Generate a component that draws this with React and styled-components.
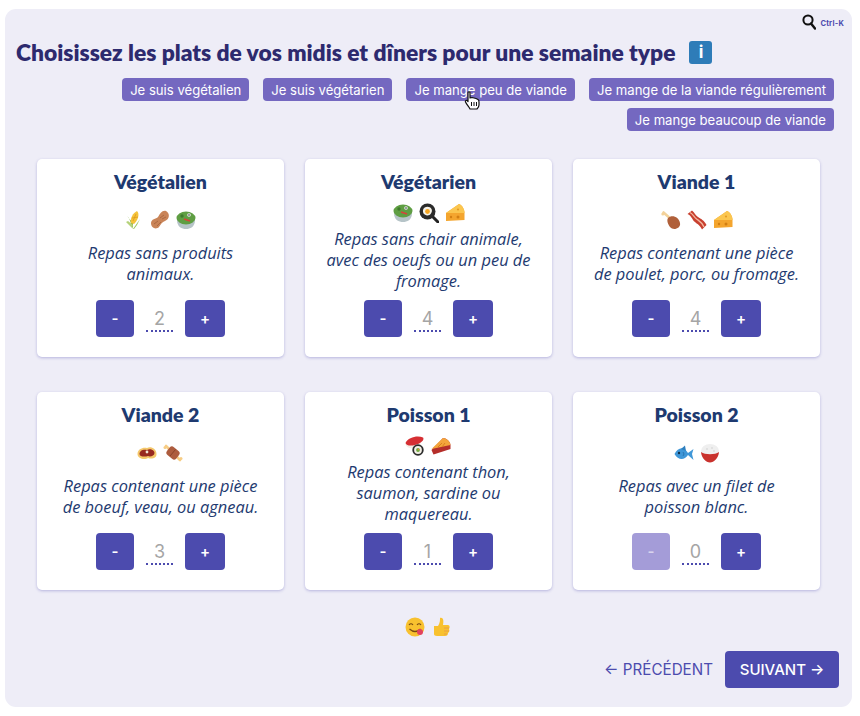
import React from 'react';
import styled, { createGlobalStyle } from 'styled-components';

const HEADING_FONT = `Lato, 'Noto Sans', sans-serif`;
const BODY_FONT = `'Open Sans', 'Noto Sans', sans-serif`;
const UI_FONT = `Inter, 'Liberation Sans', sans-serif`;

const GlobalStyle = createGlobalStyle`
  body {
    margin: 0;
    background: #fff;
    font-family: ${UI_FONT};
  }
  * { box-sizing: border-box; }
`;

const Page = styled.div`
  width: 860px;
  height: 716px;
  padding: 9px 8px 9px 5px;
  position: relative;
  overflow: hidden;
`;

const Panel = styled.main`
  height: 698px;
  background: #eeedf7;
  border-radius: 11px;
  padding: 5px 13px 0 11px;
  display: flex;
  flex-direction: column;
`;

const SearchRow = styled.div`
  height: 16px;
  display: flex;
  justify-content: flex-end;
  align-items: center;
  gap: 4px;
`;

const Shortcut = styled.span`
  font-size: 7.5px;
  font-weight: 700;
  color: #4c4bae;
  margin-right: -5px;
  padding-top: 3px;
  letter-spacing: 0.2px;
`;

const TitleRow = styled.div`
  display: flex;
  align-items: center;
  gap: 14px;
  margin-top: 7px;
  height: 30px;
`;

const Title = styled.h1`
  margin: 0;
  font-family: ${HEADING_FONT};
  font-size: 22.8px;
  line-height: 30px;
  font-weight: 800;
  color: #2d2a6e;
  white-space: nowrap;
`;

const InfoButton = styled.span`
  width: 23px;
  height: 23px;
  border-radius: 3px;
  background: #2e7cb8;
  color: #fff;
  font-size: 17px;
  font-weight: 700;
  display: flex;
  align-items: center;
  justify-content: center;
`;

const Presets = styled.div`
  display: flex;
  flex-wrap: wrap;
  justify-content: flex-end;
  gap: 7px 14px;
  margin-top: 11px;
  padding-right: 5px;
  height: 53px;
`;

const Preset = styled.button`
  height: 23px;
  padding: 1px 8px 0;
  border: none;
  border-radius: 4px;
  background: #7468c0;
  color: #fff;
  font-family: ${UI_FONT};
  font-size: 13.12px;
  line-height: 22px;
  white-space: nowrap;
`;

const Grid = styled.section`
  display: grid;
  grid-template-columns: repeat(3, 247px);
  grid-auto-rows: 198px;
  gap: 35px 21px;
  margin: 28px 0 0 21px;
`;

const Card = styled.article`
  background: #fff;
  border-radius: 5px;
  box-shadow: 0 1px 3px rgba(76, 75, 174, 0.35);
  padding: 9px 14px 20px;
  display: flex;
  flex-direction: column;
  align-items: center;
`;

const CardTitle = styled.h2`
  margin: 0 0 2px;
  font-family: ${HEADING_FONT};
  font-size: 19.5px;
  line-height: 27px;
  font-weight: 800;
  color: #1e3a70;
`;

const CardBody = styled.div`
  flex: 1;
  display: flex;
  flex-direction: column;
  justify-content: space-evenly;
  align-items: center;
`;

const Emojis = styled.div`
  height: 18px;
  margin-top: 2px;
  display: flex;
  align-items: center;
  gap: 6px;
`;

const EmojiSvg = styled.svg`
  width: 20px;
  height: 20px;
  flex: none;
`;

const Description = styled.p`
  margin: 0 0 1px;
  font-family: ${BODY_FONT};
  font-size: 16.4px;
  line-height: 21px;
  font-style: italic;
  color: #1e3a70;
  text-align: center;
  white-space: pre-line;
`;

const Controls = styled.div`
  height: 37px;
  margin-top: 3px;
  display: flex;
  align-items: center;
  gap: 12px;
`;

const StepButton = styled.button`
  width: ${({ $wide }) => ($wide ? 40 : 38)}px;
  height: 37px;
  border: none;
  border-radius: 4px;
  background: ${({ disabled }) => (disabled ? '#a49cd8' : '#4c4bae')};
  color: ${({ disabled }) => (disabled ? '#d8d4ee' : '#fff')};
  font-family: ${UI_FONT};
  font-size: 15px;
  font-weight: 600;
`;

const Count = styled.span`
  width: 27px;
  height: 26px;
  border-bottom: 2px dotted #4c4bae;
  color: #a5a5a5;
  font-size: 18px;
  line-height: 26px;
  text-align: center;
`;

const Reaction = styled.div`
  display: flex;
  justify-content: center;
  margin-top: 26px;
`;

const Nav = styled.nav`
  display: flex;
  justify-content: flex-end;
  align-items: center;
  gap: 12px;
  margin-top: 15px;
`;

const BackButton = styled.button`
  border: none;
  background: none;
  padding: 0;
  color: #4c4bae;
  font-family: ${UI_FONT};
  font-size: 15.2px;
  white-space: nowrap;
`;

const NextButton = styled.button`
  width: 114px;
  height: 37px;
  border: none;
  border-radius: 4px;
  background: #4c4bae;
  color: #fff;
  font-family: ${UI_FONT};
  font-size: 15px;
  font-weight: 500;
  white-space: nowrap;
`;

const Cursor = styled.svg`
  position: absolute;
  left: 464px;
  top: 91px;
`;

const Emoji = ({ children }) => <EmojiSvg viewBox="0 0 20 20">{children}</EmojiSvg>;

const Corn = () => (
  <Emoji>
    <path d="M9 19 L5 8 L3 6 L9 13 Z" fill="#8cb54a" />
    <path d="M9 19 L16 9 L13 15 L10 19 Z" fill="#9ac45a" />
    <path d="M8 18 L2 12 L4 11 L9 15 Z" fill="#b5d27a" />
    <path d="M7 13 C6 8 9 3 13 1 C16 4 14 10 10 14 Z" fill="#f5c33b" />
    <path d="M9 11 L12 4 M8 8 L14 7" stroke="#dd9a1c" strokeWidth="0.8" />
  </Emoji>
);

const Peanut = () => (
  <Emoji>
    <path d="M1 13 C1 9 6 9 8 7 C10 4 12 0 16 1 C20 3 20 9 15 11 C12 12 11 14 9 17 C6 20 1 18 1 13 Z" fill="#c98458" />
    <path d="M4 14 L8 11 M10 8 L14 5 M7 16 L11 12 M12 9 L16 7" stroke="#a4623c" strokeWidth="0.8" />
  </Emoji>
);

const Salad = () => (
  <Emoji>
    <path d="M1 10 C1 17 6 19 10 19 C14 19 19 17 19 10 Z" fill="#b6c4c8" />
    <ellipse cx="10" cy="8" rx="9.5" ry="6.5" fill="#5f9e43" />
    <circle cx="6" cy="6" r="1.7" fill="#3f7a2c" />
    <path d="M8 9 L14 11" stroke="#d8433a" strokeWidth="1.8" />
    <circle cx="13" cy="5" r="1.8" fill="#eef0f0" />
    <circle cx="13" cy="5" r="0.8" fill="#333" />
  </Emoji>
);

const Pan = () => (
  <Emoji>
    <path d="M13 13 L19 19" stroke="#222" strokeWidth="3" strokeLinecap="round" />
    <circle cx="8.5" cy="8.5" r="8" fill="#2b2b2b" />
    <path d="M4 7 C5 3 11 3 12.5 6 C14 9 11 13 8 12.5 C5 12 3.5 10 4 7 Z" fill="#f6f3ea" />
    <circle cx="8.5" cy="8.5" r="2.4" fill="#f6a623" />
  </Emoji>
);

const Cheese = () => (
  <Emoji>
    <path d="M1 10 L14 1 C17 2 19.5 6 19.5 10 L19.5 17 L1 18 Z" fill="#f4a52e" />
    <path d="M1 10 L14 1 C17 2 19.5 6 19.5 10 Z" fill="#fbc64f" />
    <circle cx="6" cy="14" r="1.2" fill="#d37f12" />
    <circle cx="13" cy="14" r="1.5" fill="#d37f12" />
    <circle cx="13" cy="6.5" r="1.1" fill="#e49b26" />
  </Emoji>
);

const Poultry = () => (
  <Emoji>
    <path d="M2.5 2.5 L11 10" stroke="#f3d29a" strokeWidth="2.6" strokeLinecap="round" />
    <circle cx="1.8" cy="4" r="1.5" fill="#f3d29a" />
    <path d="M7 8 C11 4 18 7 19 13 C20 18 14 20 11 18.5 C8 17 5 11 7 8 Z" fill="#b0603a" />
  </Emoji>
);

const Bacon = () => (
  <Emoji>
    <path d="M0.5 4 L5 0.5 C8 3 8 5 11 7 C14 9 17 10 19.5 15 L15 19.5 C13 15 10 14 8 12 C5 10 5 6 0.5 4 Z" fill="#c8402f" />
    <path d="M3 2.5 C6 4 7 7 9 8.5 C12 11 15 12 17 17" stroke="#f3b7a0" strokeWidth="1.3" fill="none" />
  </Emoji>
);

const Steak = () => (
  <Emoji>
    <path d="M0.5 11 C0.5 6 6 4 10 5 C13 3 19.5 5 19.5 11 C19.5 16 14 16 11 15 C8 17 0.5 16 0.5 11 Z" fill="#f4c76a" />
    <path d="M2.5 11 C2.5 7 7 6 10 7 C13 5 17.5 7 17.5 10 C17.5 13 13 14 11 13 C8 14 2.5 14 2.5 11 Z" fill="#97281f" />
    <circle cx="10" cy="9" r="1.4" fill="#f0e4d4" />
  </Emoji>
);

const MeatBone = () => (
  <Emoji>
    <path d="M3 3 L17 17" stroke="#f7cd85" strokeWidth="2.6" strokeLinecap="round" />
    <circle cx="2" cy="4.5" r="1.5" fill="#f7cd85" />
    <circle cx="18" cy="15.5" r="1.5" fill="#f7cd85" />
    <rect x="4" y="5" width="12" height="10" rx="3" transform="rotate(40 10 10)" fill="#ad5c3e" />
    <path d="M7 13 L12.5 6.5" stroke="#8a4228" strokeWidth="1" />
  </Emoji>
);

const Sushi = () => (
  <Emoji>
    <ellipse cx="8" cy="8" rx="7.5" ry="4.5" fill="#f3efe6" />
    <path d="M0.5 7 C3 1 13 -1 18 1.5 C20 4 15 8 10 9 C6 10 1.5 10 0.5 7 Z" fill="#d62f33" />
    <circle cx="13" cy="14" r="5.7" fill="#2b2b2b" />
    <circle cx="13" cy="14" r="3.9" fill="#f3efe6" />
    <circle cx="13" cy="14" r="1.9" fill="#6eaa3f" />
    <circle cx="13.5" cy="13.5" r="0.8" fill="#ef8a2a" />
  </Emoji>
);

const Pie = () => (
  <Emoji>
    <path d="M0.5 14 L12 2 C15 2 19 5 19.5 9 L19.5 13 L2.5 18.5 Z" fill="#b52e2a" />
    <path d="M0.5 13 L12 2 C15 2 19 5 19.5 9 Z" fill="#f3a43b" />
    <path d="M7 11 L11 7 M11 11 L14 7" stroke="#d87f1d" strokeWidth="1" />
  </Emoji>
);

const Fish = () => (
  <Emoji>
    <path d="M0.5 11 C4 4 10 3 14 10 L19.5 6 L18 11 L19.5 17 L14 12 C10 18 4 17 0.5 11 Z" fill="#3f97d8" />
    <path d="M7 6 L11 2.5 L12 8 Z" fill="#2f7fbe" />
    <circle cx="5" cy="10" r="1.2" fill="#12304a" />
    <path d="M9 9 L10 11 L9 13" stroke="#2872ab" strokeWidth="0.9" fill="none" />
  </Emoji>
);

const Rice = () => (
  <Emoji>
    <ellipse cx="10" cy="8" rx="9" ry="7" fill="#efefef" />
    <circle cx="7" cy="6" r="0.8" fill="#cfcfcf" />
    <circle cx="12" cy="5" r="0.8" fill="#cfcfcf" />
    <circle cx="14" cy="8" r="0.8" fill="#cfcfcf" />
    <path d="M1 9 C5 12 15 12 19 9 C18.5 15 14 19.5 10 19.5 C6 19.5 1.5 15 1 9 Z" fill="#c9322d" />
  </Emoji>
);

const Yum = () => (
  <Emoji>
    <circle cx="10" cy="10" r="9.5" fill="#f8c12f" />
    <path d="M4 8 Q6 5.5 8 8 M12 8 Q14 5.5 16 8" stroke="#7a4a10" strokeWidth="1.2" fill="none" />
    <path d="M4.5 12 Q10 17 15.5 12" stroke="#7a4a10" strokeWidth="1.2" fill="none" />
    <circle cx="15" cy="15" r="3" fill="#e2425e" />
  </Emoji>
);

const ThumbsUp = () => (
  <Emoji>
    <path d="M3 9 L7 9 C9 6 9 3 9 1 C12 0 13 3 12 8 L17 8 C19 8 19 11 18 12 C19 14 18 15 17 16 C17 18 16 19 14 19 L6 19 C4 19 3 18 3 17 Z" fill="#f8c12f" />
    <path d="M13 11 L18 11 M13 14 L18 14 M13 17 L16 17" stroke="#e89a4a" strokeWidth="0.9" />
  </Emoji>
);

const SearchIcon = () => (
  <svg width="14" height="16" viewBox="0 0 14 16">
    <circle cx="6" cy="6" r="4.6" fill="none" stroke="#111" strokeWidth="2" />
    <path d="M9 9.5 L13 14.5" stroke="#111" strokeWidth="2.4" strokeLinecap="round" />
  </svg>
);

const HandCursor = () => (
  <Cursor width="17" height="19" viewBox="0 0 17 19">
    <path
      d="M4 1.5 C4 0.5 6 0.5 6 1.5 L6 7 L8 6.5 L10 7 L12 7.5 L14 8.5 C15 9 15 10 15 11 L15 14 C15 16 14 17 13 18 L6 18 C5 16 3 14 1.5 11 C1 10 2 9 3 9.5 L4 10.5 Z"
      fill="#fff"
      stroke="#111"
      strokeWidth="1.2"
      strokeLinejoin="round"
    />
    <path d="M7.5 11 L7.5 15 M10 11 L10 15 M12.5 11 L12.5 15" stroke="#111" strokeWidth="1" />
  </Cursor>
);

const PRESETS = [
  'Je suis végétalien',
  'Je suis végétarien',
  'Je mange peu de viande',
  'Je mange de la viande régulièrement',
  'Je mange beaucoup de viande',
];

const MEALS = [
  { title: 'Végétalien', icons: [Corn, Peanut, Salad], text: 'Repas sans produits\nanimaux.', count: 2 },
  { title: 'Végétarien', icons: [Salad, Pan, Cheese], text: 'Repas sans chair animale,\navec des oeufs ou un peu de\nfromage.', count: 4 },
  { title: 'Viande 1', icons: [Poultry, Bacon, Cheese], text: 'Repas contenant une pièce\nde poulet, porc, ou fromage.', count: 4 },
  { title: 'Viande 2', icons: [Steak, MeatBone], text: 'Repas contenant une pièce\nde boeuf, veau, ou agneau.', count: 3 },
  { title: 'Poisson 1', icons: [Sushi, Pie], text: 'Repas contenant thon,\nsaumon, sardine ou\nmaquereau.', count: 1 },
  { title: 'Poisson 2', icons: [Fish, Rice], text: 'Repas avec un filet de\npoisson blanc.', count: 0 },
];

function MealCard({ meal }) {
  return (
    <Card>
      <CardTitle>{meal.title}</CardTitle>
      <CardBody>
        <Emojis>
          {meal.icons.map((Icon, i) => (
            <Icon key={i} />
          ))}
        </Emojis>
        <Description>{meal.text}</Description>
      </CardBody>
      <Controls>
        <StepButton disabled={meal.count === 0}>-</StepButton>
        <Count>{meal.count}</Count>
        <StepButton $wide>+</StepButton>
      </Controls>
    </Card>
  );
}

export default function App() {
  return (
    <Page>
      <GlobalStyle />
      <Panel>
        <SearchRow>
          <SearchIcon />
          <Shortcut>Ctrl-K</Shortcut>
        </SearchRow>
        <TitleRow>
          <Title>Choisissez les plats de vos midis et dîners pour une semaine type</Title>
          <InfoButton>i</InfoButton>
        </TitleRow>
        <Presets>
          {PRESETS.map((label) => (
            <Preset key={label}>{label}</Preset>
          ))}
        </Presets>
        <Grid>
          {MEALS.map((meal) => (
            <MealCard key={meal.title} meal={meal} />
          ))}
        </Grid>
        <Reaction>
          <Emojis>
            <Yum />
            <ThumbsUp />
          </Emojis>
        </Reaction>
        <Nav>
          <BackButton>← PRÉCÉDENT</BackButton>
          <NextButton>SUIVANT →</NextButton>
        </Nav>
      </Panel>
      <HandCursor />
    </Page>
  );
}
